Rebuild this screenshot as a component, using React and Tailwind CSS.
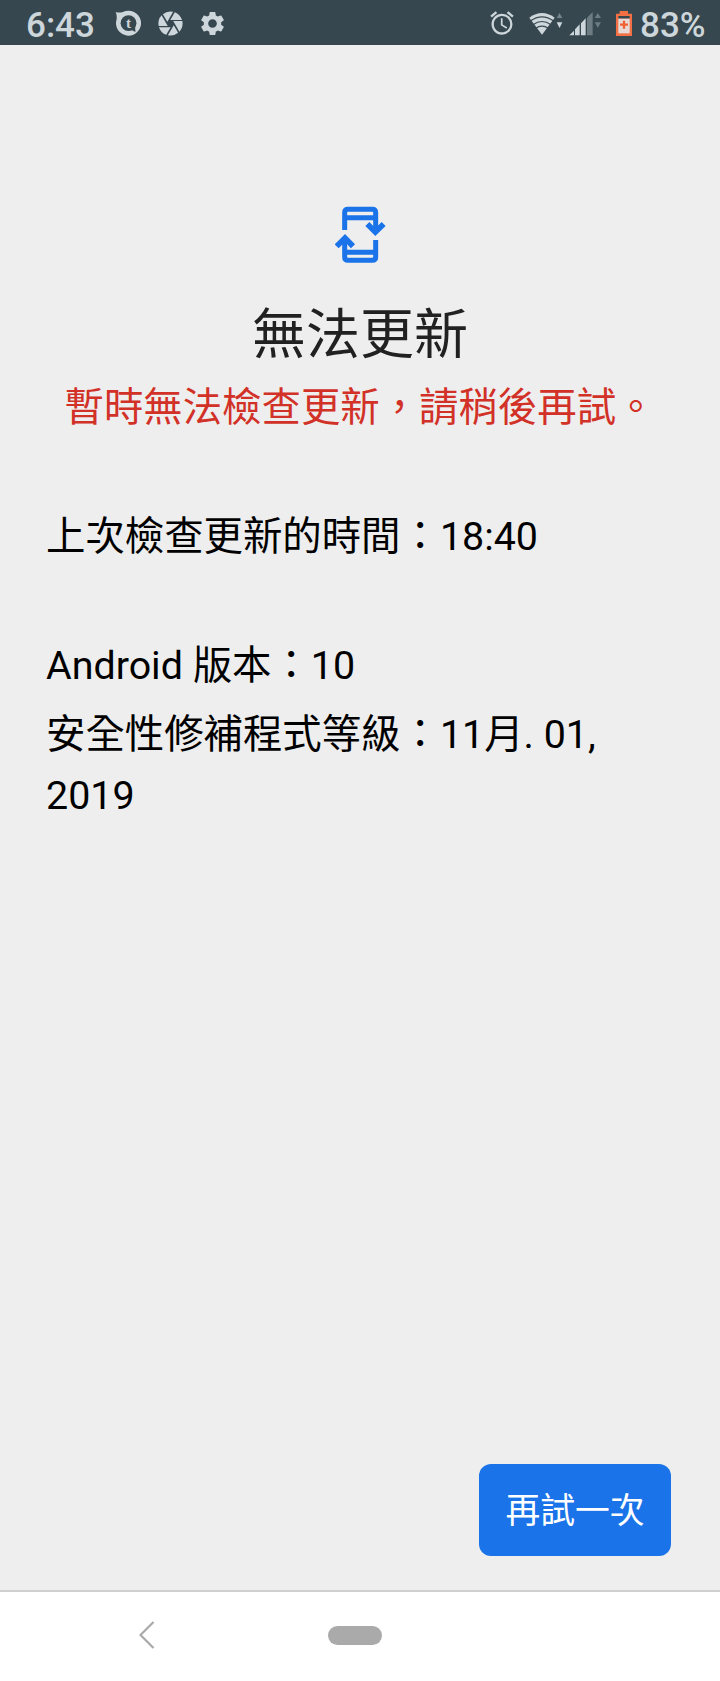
import React from "react";
import { MdAlarm, MdCamera, MdSettings } from "react-icons/md";

const TalkIcon = () => (
  <svg viewBox="345 32 82 80" className="w-[27px] h-[27px]">
    <path
      d="M347 37c8 3 15 2 22 0a38 38 0 1 1-19 22c1-8 0-15-3-22z"
      fill="#cdd6da"
    />
    <circle cx="386" cy="71" r="24" fill="#37474f" />
    <path d="M392 90l14-9 1 17z" fill="#37474f" />
    <text
      x="386"
      y="85"
      textAnchor="middle"
      fontSize="46"
      fontWeight="700"
      fontFamily="'Liberation Serif', serif"
      fill="#cdd6da"
    >
      t
    </text>
  </svg>
);

const WifiIcon = () => (
  <svg viewBox="146 32 102 78" className="w-[34px] h-[26px]">
    <path d="M147 52Q185 24 223 52L185 103z" fill="#cdd6da" />
    <g fill="none" stroke="#37474f" strokeWidth="3.5">
      <path d="M150 62Q185 37 220 62" />
      <path d="M158 73Q185 54 212 73" />
      <path d="M166 84Q185 71 204 84" />
    </g>
    <path d="M229 53l8.500-15 8.500 15z" fill="#76848b" />
    <path d="M229 66h17l-8.500 17z" fill="#cdd6da" />
  </svg>
);

const SignalIcon = () => (
  <svg viewBox="266 32 99 78" className="w-[33px] h-[26px]">
    <path d="M267 105l14-14v14zM284 105V87l14-15v33zM302 105V69l14-15v51z" fill="#cdd6da" />
    <path d="M320 105V52l17-17v70z" fill="#6d7b82" />
    <path d="M343 53l9.500-15 9.500 15zM343 66h19l-9.500 16z" fill="#6d7b82" />
  </svg>
);

const BatteryIcon = () => (
  <svg viewBox="408 32 48 75" className="w-4 h-[25px]">
    <path d="M419 32h25v8h12v67h-48V40h11z" fill="#f27043" />
    <path d="M415 47h34v8h-34z" fill="#37474f" />
    <path d="M415 55h34v44h-34z" fill="#e6d9d6" />
    <path d="M432 61v24M420 73h24" stroke="#f06030" strokeWidth="7" />
  </svg>
);

const UpdateIcon = () => (
  <svg
    viewBox="75 48 153 174"
    className="w-[51px] h-[58px]"
    fill="none"
    stroke="#1a73e8"
    strokeWidth="15"
  >
    <path d="M104 120V68q0-10 10-10h73q10 0 10 10v55M104 83h93" />
    <path d="M197 150v51q0 10-10 10h-73q-10 0-10-10v-55M104 187h93" />
    <g strokeWidth="17">
      <path d="M172 102l24 24 25-24" />
      <path d="M80 169l25-25 24 25" />
    </g>
  </svg>
);

const StatusBar = () => (
  <div className="h-[45px] flex items-center bg-[#37474f] text-[#cdd6da] pl-[26px] pr-[16px]">
    <span className="text-[35px] leading-none font-medium mt-[5px] w-[89px]">
      6:43
    </span>
    <div className="mt-[2px] flex">
      <TalkIcon />
    </div>
    <MdCamera className="w-[29px] h-[29px] ml-[14px] mt-[2px]" />
    <MdSettings className="w-[29px] h-[29px] ml-[13px] mt-[2px]" />
    <div className="ml-auto flex items-center">
      <MdAlarm className="w-[28px] h-[28px] mt-[1px]" />
      <div className="ml-[13px] mt-[2px] flex">
        <WifiIcon />
      </div>
      <div className="ml-[6px] mt-[2px] flex">
        <SignalIcon />
      </div>
      <div className="ml-[14px] mt-[2px] flex">
        <BatteryIcon />
      </div>
      <span className="text-[35px] leading-none font-medium mt-[5px] ml-[8px] w-[64px]">
        83%
      </span>
    </div>
  </div>
);

const NavBar = () => (
  <div className="h-[91px] bg-white border-t-2 border-[#cfcfcf] flex items-start">
    <svg
      viewBox="0 0 16 28"
      className="w-4 h-7 ml-[139px] mt-[29px]"
      fill="none"
      stroke="#a9a9a9"
      strokeWidth="2.2"
    >
      <path d="M14.500 1L1.500 14l13 13" />
    </svg>
    <div className="w-[54px] h-[19px] rounded-full bg-[#aaaaaa] ml-[173px] mt-[34px]"></div>
  </div>
);

const App = () => {
  return (
    <div
      lang="zh-Hant"
      className="w-[720px] h-[1681px] flex flex-col bg-[#eeeeee] overflow-hidden font-['Roboto','Noto_Sans_CJK_TC',sans-serif]"
    >
      <StatusBar />
      <div className="flex-1 flex flex-col">
        <div className="flex flex-col items-center pt-[161px]">
          <UpdateIcon />
          <h1 className="text-[54px] leading-[64px] mt-[40px] text-[#212121]">
            無法更新
          </h1>
          <p className="text-[39.4px] leading-[56px] mt-[12px] text-[#d23127] whitespace-nowrap">
            暫時無法檢查更新，請稍後再試。
          </p>
        </div>
        <div className="px-[46px] text-[39.4px] leading-[61px] text-black">
          <p className="mt-[70px]">上次檢查更新的時間：18:40</p>
          <p className="mt-[68px]">Android 版本：10</p>
          <p className="mt-[8px]">
            安全性修補程式等級：11月. 01,
            <br />
            2019
          </p>
        </div>
        <button className="mt-auto mb-[34px] mr-[49px] pt-[2px] self-end w-[192px] h-[92px] rounded-[12px] bg-[#1a73e8] text-white text-[34.800px]">
          再試一次
        </button>
      </div>
      <NavBar />
    </div>
  );
};

export default App;
